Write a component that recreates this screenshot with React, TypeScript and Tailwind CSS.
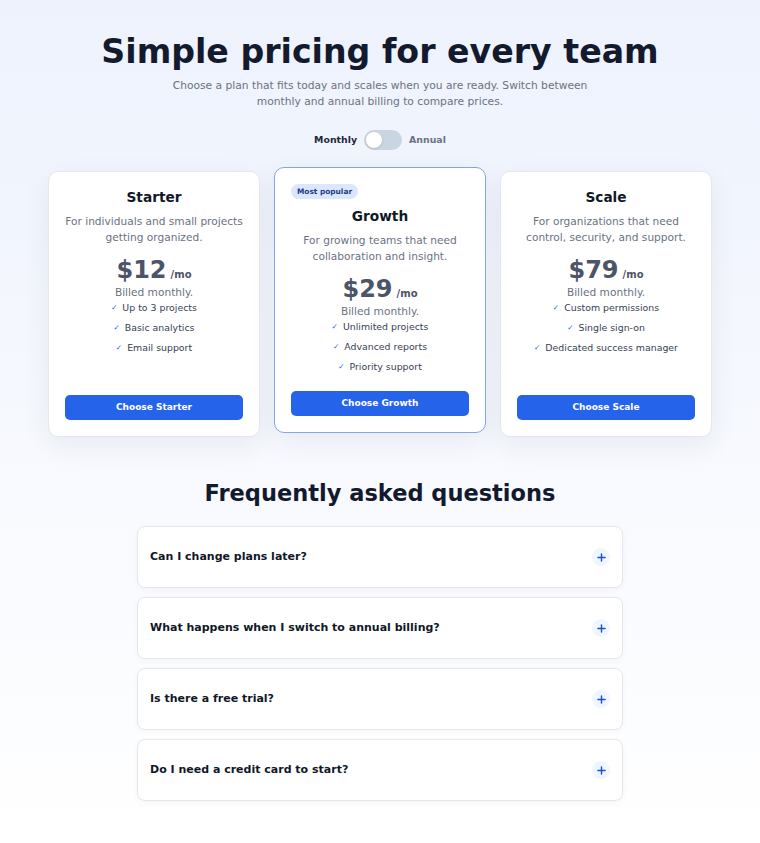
import { useState } from "react";

type Plan = {
  name: string;
  description: string;
  monthly: number;
  annual: number;
  features: string[];
  popular?: boolean;
};

const plans: Plan[] = [
  {
    name: "Starter",
    description: "For individuals and small projects getting organized.",
    monthly: 12,
    annual: 10,
    features: ["Up to 3 projects", "Basic analytics", "Email support"],
  },
  {
    name: "Growth",
    description: "For growing teams that need collaboration and insight.",
    monthly: 29,
    annual: 24,
    features: ["Unlimited projects", "Advanced reports", "Priority support"],
    popular: true,
  },
  {
    name: "Scale",
    description: "For organizations that need control, security, and support.",
    monthly: 79,
    annual: 66,
    features: ["Custom permissions", "Single sign-on", "Dedicated success manager"],
  },
];

const faqs = [
  {
    q: "Can I change plans later?",
    a: "Yes. Upgrade or downgrade at any time and we will prorate the difference.",
  },
  {
    q: "What happens when I switch to annual billing?",
    a: "You are billed once a year at the discounted rate shown above.",
  },
  {
    q: "Is there a free trial?",
    a: "Every plan starts with a 14-day free trial.",
  },
  {
    q: "Do I need a credit card to start?",
    a: "No card is needed until the trial ends.",
  },
];

const PlusIcon = ({ open }: { open: boolean }) => (
  <svg viewBox="0 0 10 10" className="h-[9px] w-[9px]" fill="none" stroke="currentColor" strokeWidth={1.6} strokeLinecap="round">
    <path d="M1 5h8" />
    {!open && <path d="M5 1v8" />}
  </svg>
);

const PlanCard = ({ plan, annual }: { plan: Plan; annual: boolean }) => {
  const price = annual ? plan.annual : plan.monthly;
  return (
    <div
      className={`flex flex-col rounded-[10px] border bg-white p-4 text-center shadow-[0_8px_28px_rgba(30,41,59,0.07)] ${
        plan.popular ? "-translate-y-1 border-[#86a5e6]" : "border-gray-200"
      }`}
    >
      {plan.popular && (
        <span className="mb-2 self-start rounded-full bg-[#dbe7fd] px-[6px] text-[7.4px] font-bold leading-[15px] text-[#1e3a8a]">
          Most popular
        </span>
      )}
      <h3 className="text-[13.7px] font-bold leading-[18px] text-gray-900">{plan.name}</h3>
      <p className="mt-[7px] text-[10.6px] leading-4 text-gray-500">{plan.description}</p>
      <div className="mt-3 h-[27px] leading-[27px] text-[#4b5567]">
        <span className="text-[24px] font-bold">${price}</span>
        <span className="ml-1 text-[10px] font-bold leading-none">/mo</span>
      </div>
      <p className="text-[10.6px] leading-4 text-gray-500">
        {annual ? "Billed annually." : "Billed monthly."}
      </p>
      <ul className="mb-4 flex flex-col gap-1 text-[9.4px] text-gray-700">
        {plan.features.map((f) => (
          <li key={f} className="flex h-4 items-center justify-center gap-[5px]">
            <span className="text-[7.5px] leading-none text-[#2563eb]">✓</span>
            <span className="leading-4">{f}</span>
          </li>
        ))}
      </ul>
      <button className="mt-auto h-[25px] rounded-[5px] bg-[#2563eb] text-[9px] font-bold text-white">
        Choose {plan.name}
      </button>
    </div>
  );
};

export default function App() {
  const [annual, setAnnual] = useState(false);
  const [openFaq, setOpenFaq] = useState<number | null>(null);

  return (
    <div className="min-h-screen bg-gradient-to-b from-[#edf2fd] to-white pb-10 pt-[35px] font-['DejaVu_Sans',sans-serif]">
      <header className="text-center">
        <h1 className="text-[33.2px] font-bold leading-[34px] text-[#131a2e]">Simple pricing for every team</h1>
        <p className="mx-auto mt-[9px] max-w-[424px] text-[10.7px] leading-4 text-gray-500">
          Choose a plan that fits today and scales when you are ready. Switch between monthly and annual billing
          to compare prices.
        </p>
      </header>

      <div className="mt-5 flex items-center justify-center gap-[7px] text-[9.4px] font-bold">
        <span className={annual ? "text-gray-500" : "text-gray-800"}>Monthly</span>
        <button
          onClick={() => setAnnual(!annual)}
          className={`flex h-5 w-[38px] items-center rounded-full px-[2px] ${annual ? "bg-[#2563eb]" : "bg-slate-300"}`}
        >
          <span
            className={`h-4 w-4 rounded-full bg-white shadow-sm transition-transform ${annual ? "translate-x-[18px]" : ""}`}
          />
        </button>
        <span className={annual ? "text-gray-800" : "text-gray-500"}>Annual</span>
      </div>

      <section className="mx-auto mt-[21px] grid w-[664px] grid-cols-3 gap-[14px]">
        {plans.map((p) => (
          <PlanCard key={p.name} plan={p} annual={annual} />
        ))}
      </section>

      <section className="mx-auto mt-[42px] w-[486px]">
        <h2 className="text-center text-[22.5px] font-bold leading-7 text-[#131a2e]">Frequently asked questions</h2>
        <div className="mt-[19px] flex flex-col gap-[9px]">
          {faqs.map((f, i) => (
            <div key={f.q} className="rounded-lg border border-gray-200 bg-white shadow-[0_2px_6px_rgba(30,41,59,0.04)]">
              <button
                onClick={() => setOpenFaq(openFaq === i ? null : i)}
                className="flex h-[60px] w-full items-center justify-between px-3 text-left"
              >
                <span className="text-[11px] font-bold text-gray-900">{f.q}</span>
                <span className="flex h-[18px] w-[18px] items-center justify-center rounded-full bg-blue-50 text-[#1d4ed8]">
                  <PlusIcon open={openFaq === i} />
                </span>
              </button>
              {openFaq === i && <p className="px-3 pb-4 text-[10.6px] leading-4 text-gray-500">{f.a}</p>}
            </div>
          ))}
        </div>
      </section>
    </div>
  );
}
